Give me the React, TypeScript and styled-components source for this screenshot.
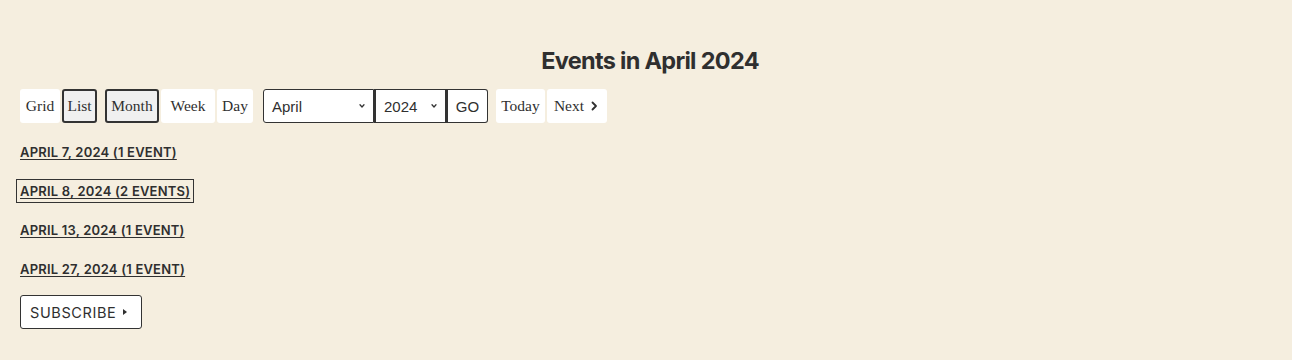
import styled, { createGlobalStyle } from 'styled-components';

const GlobalStyle = createGlobalStyle`
	html, body {
		margin: 0;
		padding: 0;
		background: #f5eedf;
	}
	body {
		font-family: 'Inter', 'Liberation Sans', sans-serif;
		color: #2f2f2f;
	}
`;

const days = [
	{ label: 'April 7, 2024 (1 event)', focused: false },
	{ label: 'April 8, 2024 (2 events)', focused: true },
	{ label: 'April 13, 2024 (1 event)', focused: false },
	{ label: 'April 27, 2024 (1 event)', focused: false },
];

function Chevron({ size = 8 }: { size?: number }) {
	return (
		<svg width={size} height={size} viewBox="0 0 10 10" fill="none">
			<path d="M2.5 3.5 L5 6.2 L7.5 3.5" stroke="#333" strokeWidth="1.6" strokeLinecap="round" strokeLinejoin="round" />
		</svg>
	);
}

function App() {
	return (
		<Page>
			<GlobalStyle />
			<Title>Events in April 2024</Title>
			<Toolbar>
				<NavGroup>
					<NavBtn $w={40}>Grid</NavBtn>
					<NavBtn $w={35} $active>
						List
					</NavBtn>
				</NavGroup>
				<NavGroup>
					<NavBtn $w={54} $active>
						Month
					</NavBtn>
					<NavBtn $w={54}>Week</NavBtn>
					<NavBtn $w={36}>Day</NavBtn>
				</NavGroup>
				<JumpForm>
					<SelectWrap $width={111}>
						<span>April</span>
						<Chevron />
					</SelectWrap>
					<SelectWrap $width={72}>
						<span>2024</span>
						<Chevron />
					</SelectWrap>
					<GoBtn>GO</GoBtn>
				</JumpForm>
				<NavGroup>
					<NavBtn $w={49}>Today</NavBtn>
					<NavBtn $w={60}>
						Next
						<svg width="12" height="12" viewBox="0 0 12 12" fill="none">
							<path d="M4.5 2.5 L8 6 L4.5 9.5" stroke="#2f2f2f" strokeWidth="1.8" strokeLinecap="round" strokeLinejoin="round" />
						</svg>
					</NavBtn>
				</NavGroup>
			</Toolbar>
			<DayList>
				{days.map((d) => (
					<DayItem key={d.label}>
						<DayLink href="#" $focused={d.focused}>
							{d.label}
						</DayLink>
					</DayItem>
				))}
			</DayList>
			<Subscribe>
				SUBSCRIBE
				<svg width="6" height="8" viewBox="0 0 6 8">
					<path d="M1 1 L5 4 L1 7 Z" fill="#2f2f2f" />
				</svg>
			</Subscribe>
		</Page>
	);
}

const Page = styled.div`
	padding: 44px 20px 32px;
`;

const Title = styled.h2`
	margin: 0 0 11px;
	padding-left: 8px;
	text-align: center;
	font-family: 'Inter', sans-serif;
	font-size: 23.5px;
	line-height: 34px;
	font-weight: 700;
	letter-spacing: -0.7px;
	color: #2f2f2f;
`;

const Toolbar = styled.div`
	display: flex;
	flex-flow: row nowrap;
	align-items: center;
	gap: 8px;
	height: 34px;
`;

const NavGroup = styled.div`
	display: flex;
	flex-flow: row nowrap;
	gap: 2px;
`;

const NavBtn = styled.button<{ $active?: boolean; $w: number }>`
	display: flex;
	align-items: center;
	justify-content: center;
	gap: 4px;
	box-sizing: border-box;
	width: ${(p) => p.$w}px;
	height: 34px;
	padding: 0 2px;
	border: ${(p) => (p.$active ? '2px solid #333' : 'none')};
	border-radius: 3px;
	background: ${(p) => (p.$active ? '#f0f0f0' : '#fff')};
	font-family: 'Liberation Serif', 'DejaVu Serif', serif;
	font-size: 15.5px;
	color: #2f2f2f;
	cursor: pointer;
`;

const JumpForm = styled.div`
	display: flex;
	flex-flow: row nowrap;
	margin-left: 2px;
`;

const SelectWrap = styled.div<{ $width: number }>`
	display: flex;
	align-items: center;
	justify-content: space-between;
	box-sizing: border-box;
	width: ${(p) => p.$width}px;
	height: 34px;
	padding: 0 7px 0 8px;
	background: #fff;
	border: 1px solid #333;
	font-family: 'Liberation Sans', Arial, sans-serif;
	font-size: 15px;
	color: #2f2f2f;
	&:first-child {
		border-radius: 3px 0 0 3px;
	}
	& + & {
		border-left-width: 2px;
	}
`;

const GoBtn = styled.button`
	box-sizing: border-box;
	height: 34px;
	width: 42px;
	padding: 0;
	background: #fff;
	border: 1px solid #333;
	border-left-width: 2px;
	border-radius: 0 3px 3px 0;
	font-family: 'Liberation Sans', Arial, sans-serif;
	font-size: 15px;
	color: #2f2f2f;
`;

const DayList = styled.ul`
	list-style: none;
	margin: 20px 0 0;
	padding: 0;
	display: flex;
	flex-flow: column nowrap;
	gap: 23px;
`;

const DayItem = styled.li`
	line-height: 16px;
	height: 16px;
`;

const DayLink = styled.a<{ $focused?: boolean }>`
	font-family: 'Inter', sans-serif;
	font-size: 13px;
	font-weight: 600;
	text-transform: uppercase;
	letter-spacing: 0.2px;
	color: #2f2f2f;
	text-decoration: underline;
	text-underline-offset: 2px;
	outline: ${(p) => (p.$focused ? '1px solid #333' : 'none')};
	outline-offset: 3px;
`;

const Subscribe = styled.button`
	display: flex;
	align-items: center;
	gap: 6px;
	margin-top: 19px;
	box-sizing: border-box;
	height: 34px;
	padding: 0 13px 0 9px;
	background: #fff;
	border: 1px solid #333;
	border-radius: 3px;
	font-family: 'Inter', sans-serif;
	font-size: 14.5px;
	letter-spacing: 0.6px;
	color: #2f2f2f;
`;

export default App;
